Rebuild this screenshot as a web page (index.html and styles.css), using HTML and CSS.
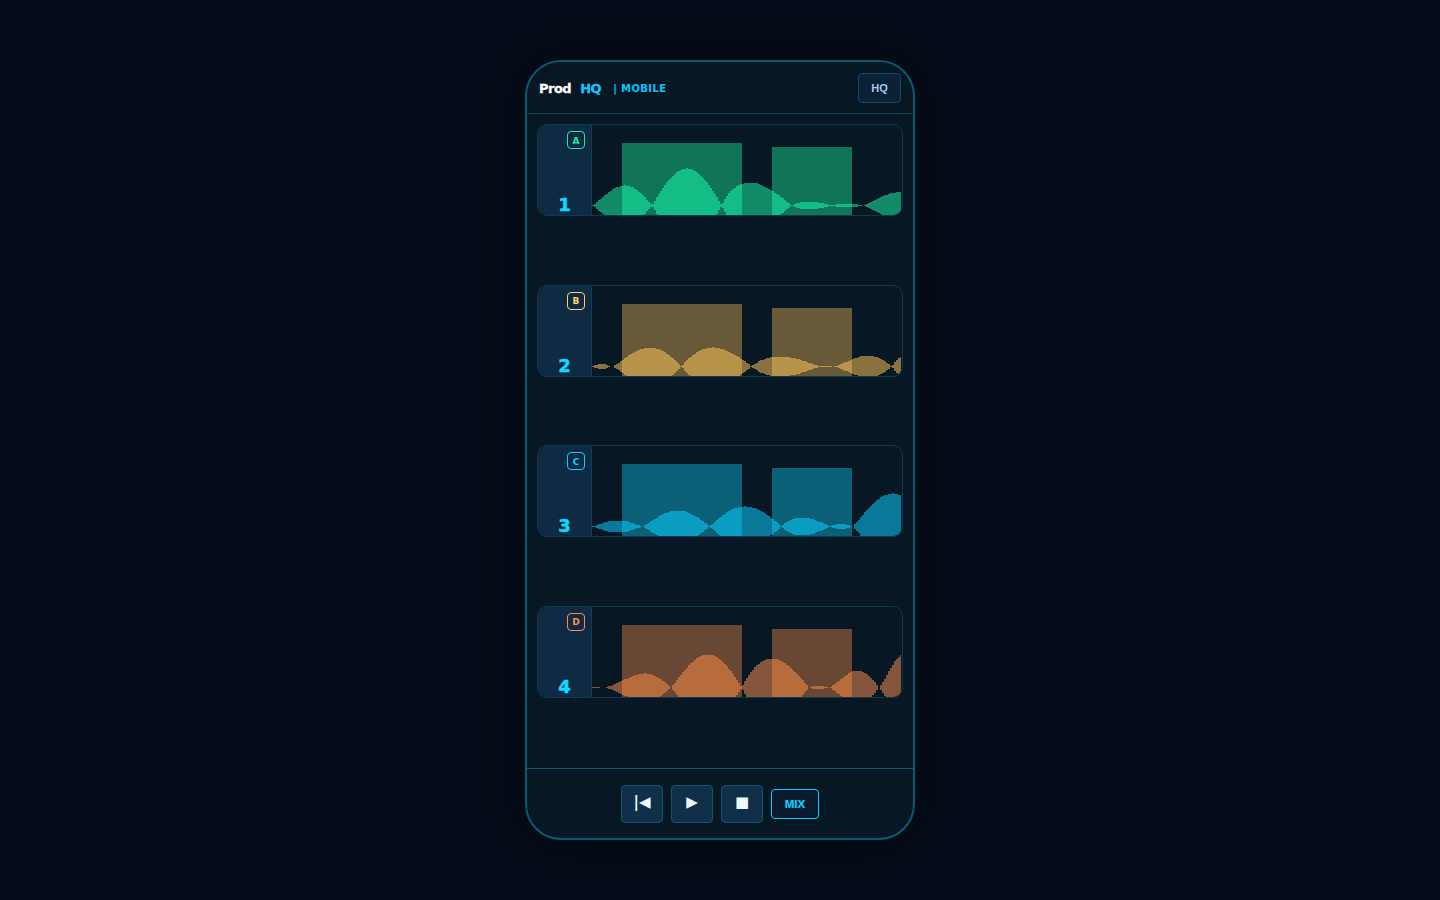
FILE: index.html
```html
<!DOCTYPE html>
<html lang="en">
<head>
<meta charset="utf-8">
<title>ProdHQ Mobile</title>
<link rel="stylesheet" href="styles.css">
</head>
<body>
<main class="phone">
  <header class="top">
    <div class="brand"><span class="brand-a">Prod</span><span class="brand-b">HQ</span><span class="brand-c">| MOBILE</span></div>
    <button class="hq">HQ</button>
  </header>
  <section class="tracks">
    <article class="track">
      <div class="head"><span class="badge badge-a">A</span><span class="num">1</span></div>
      <canvas class="wave" width="310" height="90" data-wave="a"></canvas>
    </article>
    <article class="track">
      <div class="head"><span class="badge badge-b">B</span><span class="num">2</span></div>
      <canvas class="wave" width="310" height="90" data-wave="b"></canvas>
    </article>
    <article class="track">
      <div class="head"><span class="badge badge-c">C</span><span class="num">3</span></div>
      <canvas class="wave" width="310" height="90" data-wave="c"></canvas>
    </article>
    <article class="track">
      <div class="head"><span class="badge badge-d">D</span><span class="num">4</span></div>
      <canvas class="wave" width="310" height="90" data-wave="d"></canvas>
    </article>
  </section>
  <footer class="controls">
    <button class="ctl">|◀</button>
    <button class="ctl">▶</button>
    <button class="ctl">■</button>
    <button class="mix">MIX</button>
  </footer>
</main>
<script src="app.js"></script>
</body>
</html>
```
FILE: styles.css
```css
* { box-sizing: border-box; }
html, body { height: 100%; }
body {
  margin: 0;
  background: #050d1a;
  display: flex;
  align-items: center;
  justify-content: center;
  font-family: "DejaVu Sans", sans-serif;
}
.phone {
  width: 390px;
  height: 780px;
  border: 2px solid #0b5873;
  border-radius: 36px;
  background: #081724;
  box-shadow: 0 0 60px rgba(0, 0, 0, 0.4);
  display: flex;
  flex-direction: column;
  overflow: hidden;
}
.top {
  height: 52px;
  flex: none;
  padding: 0 12px;
  display: flex;
  align-items: center;
  justify-content: space-between;
  border-bottom: 1px solid #0e3f56;
}
.brand { display: flex; align-items: center; padding-top: 1px; font-weight: 700; }
.brand-a { color: #ffffff; font-size: 13px; letter-spacing: -0.5px; -webkit-text-stroke: 0.3px #ffffff; }
.brand-b { color: #14c4ff; font-size: 13px; letter-spacing: -0.5px; margin-left: 9px; -webkit-text-stroke: 0.3px #14c4ff; }
.brand-c { color: #00c8ff; font-size: 10px; margin-left: 12px; letter-spacing: 0.4px; }
.hq {
  width: 43px;
  height: 30px;
  padding: 0;
  background: #0c2038;
  border: 1px solid #0e4a68;
  border-radius: 4px;
  color: #a8c8e8;
  font: 700 11px "Liberation Sans", sans-serif;
}
.tracks {
  flex: 1;
  padding: 10px;
  display: grid;
  grid-template-rows: repeat(4, 1fr);
  gap: 8px;
  min-height: 0;
}
.track {
  height: 92px;
  border: 1px solid #0e3a50;
  border-radius: 10px;
  display: flex;
  overflow: hidden;
}
.head {
  width: 54px;
  flex: none;
  padding: 6px 6px 0 0;
  background: #0f2b43;
  border-right: 1px solid #0e3f56;
  display: flex;
  flex-direction: column;
  align-items: flex-end;
  justify-content: space-between;
}
.badge {
  width: 18px;
  height: 18px;
  padding-top: 1px;
  border: 1px solid;
  border-radius: 4px;
  display: flex;
  align-items: center;
  justify-content: center;
  font-size: 9px;
  font-weight: 700;
}
.badge-a { color: #1de9a0; border-color: #1de9a0; }
.badge-b { color: #ffd166; border-color: #ffd166; }
.badge-c { color: #00d4ff; border-color: #00d4ff; }
.badge-d { color: #ff8c42; border-color: #ff8c42; }
.num {
  align-self: center;
  margin-right: -6px;
  color: #08dcff;
  font-size: 18px;
  font-weight: 700;
  line-height: 20px;
  -webkit-text-stroke: 0.4px #08dcff;
}
.wave { display: block; width: 310px; height: 90px; }
.controls {
  height: 70px;
  flex: none;
  border-top: 1px solid #0b5873;
  display: flex;
  align-items: center;
  justify-content: center;
  gap: 8px;
}
.ctl {
  width: 42px;
  height: 38px;
  padding: 0 0 4px;
  background: #0f3048;
  border: 1px solid #0e5570;
  border-radius: 4px;
  color: #eef8ff;
  font: 700 15px "DejaVu Sans", sans-serif;
}
.mix {
  width: 48px;
  height: 30px;
  padding: 0;
  background: #0a1a2e;
  border: 1px solid #00d4ff;
  border-radius: 4px;
  color: #00d4ff;
  font: 700 11.5px "Liberation Sans", sans-serif;
  -webkit-text-stroke: 0.2px #00d4ff;
}
```
FILE: app.js
```js
// Each lobe: [start, end, peak, height] in canvas pixels.
var WAVES = {
  a: { bar: "#107458", off: "#128c68", on: "#14bd85", lobes: [
    [0, 60, 33, 20], [60, 130, 95, 37], [130, 200, 158, 23],
    [200, 240, 216, 4], [240, 271, 254, 2], [271, 353, 313, 14] ] },
  b: { bar: "#685a38", off: "#8a7240", on: "#b8944a", lobes: [
    [0, 19, 9, 2.5], [21, 90, 58, 19], [90, 160, 121, 19],
    [160, 228, 188, 10], [228, 241, 234, 1], [241, 300, 276, 11], [300, 323, 311, 10] ] },
  c: { bar: "#0b6078", off: "#0a7898", on: "#0b9cc2", lobes: [
    [0, 50, 26, 6], [51, 118, 86, 16], [118, 190, 153, 20],
    [190, 238, 210, 9], [238, 261, 249, 2.5], [261, 338, 301, 33] ] },
  d: { bar: "#684834", off: "#84553a", on: "#b86c3c", lobes: [
    [0, 9, 4, 0.7], [12, 79, 53, 14], [79, 150, 116, 33],
    [150, 217, 180, 29], [217, 236, 226, 2], [237, 287, 266, 17], [287, 333, 313, 34] ] }
};
var BARS = [[30, 18, 120, 72], [180, 22, 80, 68]];
var STEP = 2;
var CENTER = 80.5;

function amplitude(lobes, x) {
  for (var i = 0; i < lobes.length; i++) {
    var l = lobes[i];
    if (x >= l[0] && x < l[1]) {
      var w = l[1] - l[0];
      var p = Math.log(0.5) / Math.log((l[2] - l[0]) / w);
      return l[3] * Math.sin(Math.PI * Math.pow((x - l[0]) / w, p));
    }
  }
  return 0;
}

function inBar(x) {
  return BARS.some(function (b) { return x >= b[0] && x < b[0] + b[2]; });
}

document.querySelectorAll("canvas[data-wave]").forEach(function (cv) {
  var d = WAVES[cv.dataset.wave];
  var g = cv.getContext("2d");
  g.fillStyle = d.bar;
  BARS.forEach(function (b) { g.fillRect(b[0], b[1], b[2], b[3]); });
  for (var x = 0; x < 309; x++) {
    var q = Math.floor(x / STEP) * STEP + STEP / 2;
    var raw = amplitude(d.lobes, q);
    if (raw < 0.2) { continue; }
    var a = Math.floor(raw) + 0.5;
    g.fillStyle = inBar(x) ? d.on : d.off;
    g.fillRect(x, CENTER - a, 1, 2 * a);
  }
});
```
